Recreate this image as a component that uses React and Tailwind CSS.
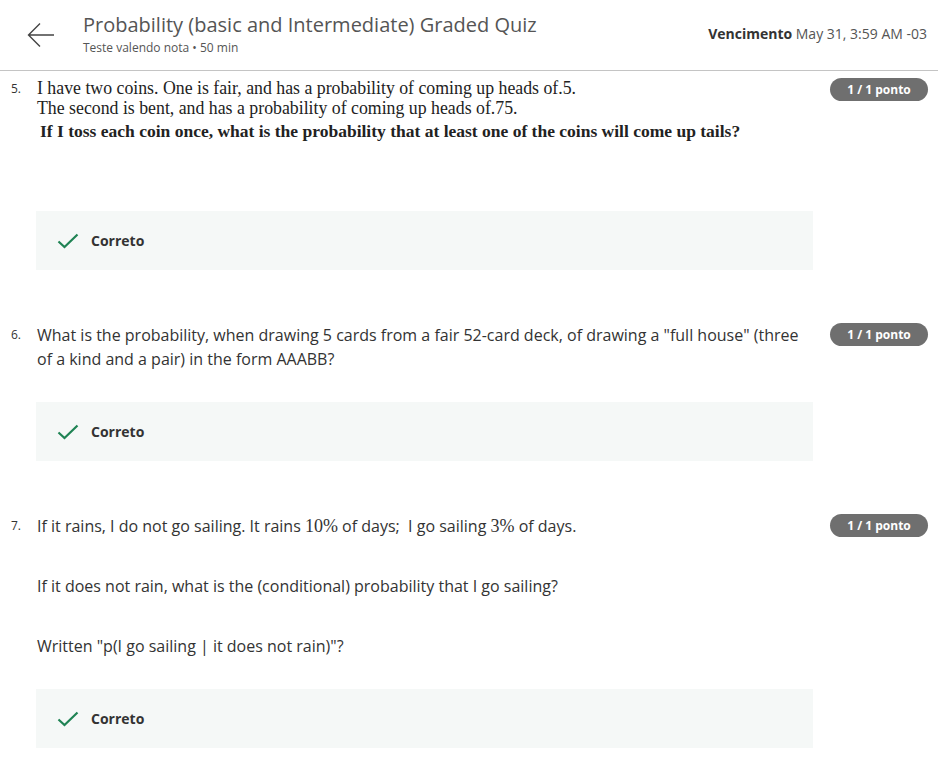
import React from "react";

function Badge() {
  return (
    <div className="shrink-0 w-[98px] h-[23px] rounded-full bg-[#6f6f6f] text-white text-[12px] font-bold flex items-center justify-center">
      1 / 1 ponto
    </div>
  );
}

function Correct() {
  return (
    <div className="ml-[36px] w-[777px] h-[59px] bg-[#f5f8f7] flex items-center pl-[21px]">
      <svg width="22" height="16" viewBox="0 0 22 16" className="mr-[12px]">
        <path d="M1.5 8.5 L7.5 14 L20.5 1.5" fill="none" stroke="#1f8354" strokeWidth="2.2" />
      </svg>
      <span className="text-[14px] font-bold text-[#333]">Correto</span>
    </div>
  );
}

export default function App() {
  return (
    <div className="w-[938px] h-[773px] bg-white overflow-hidden text-[#333]" style={{ fontFamily: '"Open Sans", sans-serif' }}>
      <header className="h-[71px] border-b border-[#c4c4c4] flex items-start">
        <div className="pl-[27px] pt-[22px]">
          <svg width="28" height="26" viewBox="0 0 28 26">
            <path d="M13 1.5 L1.5 13 L13 24.5 M1.5 13 L27 13" fill="none" stroke="#444" strokeWidth="1.4" />
          </svg>
        </div>
        <div className="ml-[28px] pt-[12px] flex-1">
          <div className="text-[20px] leading-[26px] text-[#555]">Probability (basic and Intermediate) Graded Quiz</div>
          <div className="text-[12px] leading-[16px] text-[#555] mt-[2px]">Teste valendo nota • 50 min</div>
        </div>
        <div className="pt-[23px] pr-[11px] text-[14px] text-[#555]">
          <span className="font-bold text-[#333]">Vencimento</span> May 31, 3:59 AM -03
        </div>
      </header>

      <section className="pt-[7px]">
        <div className="flex items-start pr-[10px]">
          <div className="w-[26px] pl-[11px] text-[12px] pt-[2px] text-[#333]">5.</div>
          <div className="flex-1 pl-[11px] text-[#222] leading-[22px]" style={{ fontFamily: '"Liberation Serif", serif' }}>
            <div className="text-[17.8px] leading-[22px] mt-[-1px]">I have two coins. One is fair, and has a probability of coming up heads of.5.</div>
            <div className="text-[17.8px] leading-[22px] mt-[-2px]">The second is bent, and has a probability of coming up heads of.75.</div>
            <div className="text-[17.5px] leading-[22px] pl-[3px] mt-[1px] font-bold">If I toss each coin once, what is the probability that at least one of the coins will come up tails?</div>
          </div>
          <Badge />
        </div>
        <div className="h-[69px]" />
        <Correct />
      </section>

      <section className="pt-[53px]">
        <div className="flex items-start pr-[10px]">
          <div className="w-[26px] pl-[11px] text-[12px] pt-[3px]">6.</div>
          <div className="flex-1 pl-[11px] pr-[20px] text-[16px] leading-[24px]">
            What is the probability, when drawing 5 cards from a fair 52-card deck, of drawing a "full house" (three of a kind and a pair) in the form AAABB?
          </div>
          <Badge />
        </div>
        <div className="h-[31px]" />
        <Correct />
      </section>

      <section className="pt-[53px]">
        <div className="flex items-start pr-[10px]">
          <div className="w-[26px] pl-[11px] text-[12px] pt-[3px]">7.</div>
          <div className="flex-1 pl-[11px] text-[16px] leading-[24px]">
            If it rains, I do not go sailing. It rains <span style={{ fontFamily: '"Liberation Serif", serif' }} className="text-[18px]">10%</span> of days;&nbsp; I go sailing <span style={{ fontFamily: '"Liberation Serif", serif' }} className="text-[18px]">3%</span> of days.
          </div>
          <Badge />
        </div>
        <div className="pl-[37px] text-[16px] leading-[24px] mt-[36px]">If it does not rain, what is the (conditional) probability that I go sailing?</div>
        <div className="pl-[37px] text-[16px] leading-[24px] mt-[36px]">Written "p(I go sailing | it does not rain)"?</div>
        <div className="h-[31px]" />
        <Correct />
      </section>
    </div>
  );
}
